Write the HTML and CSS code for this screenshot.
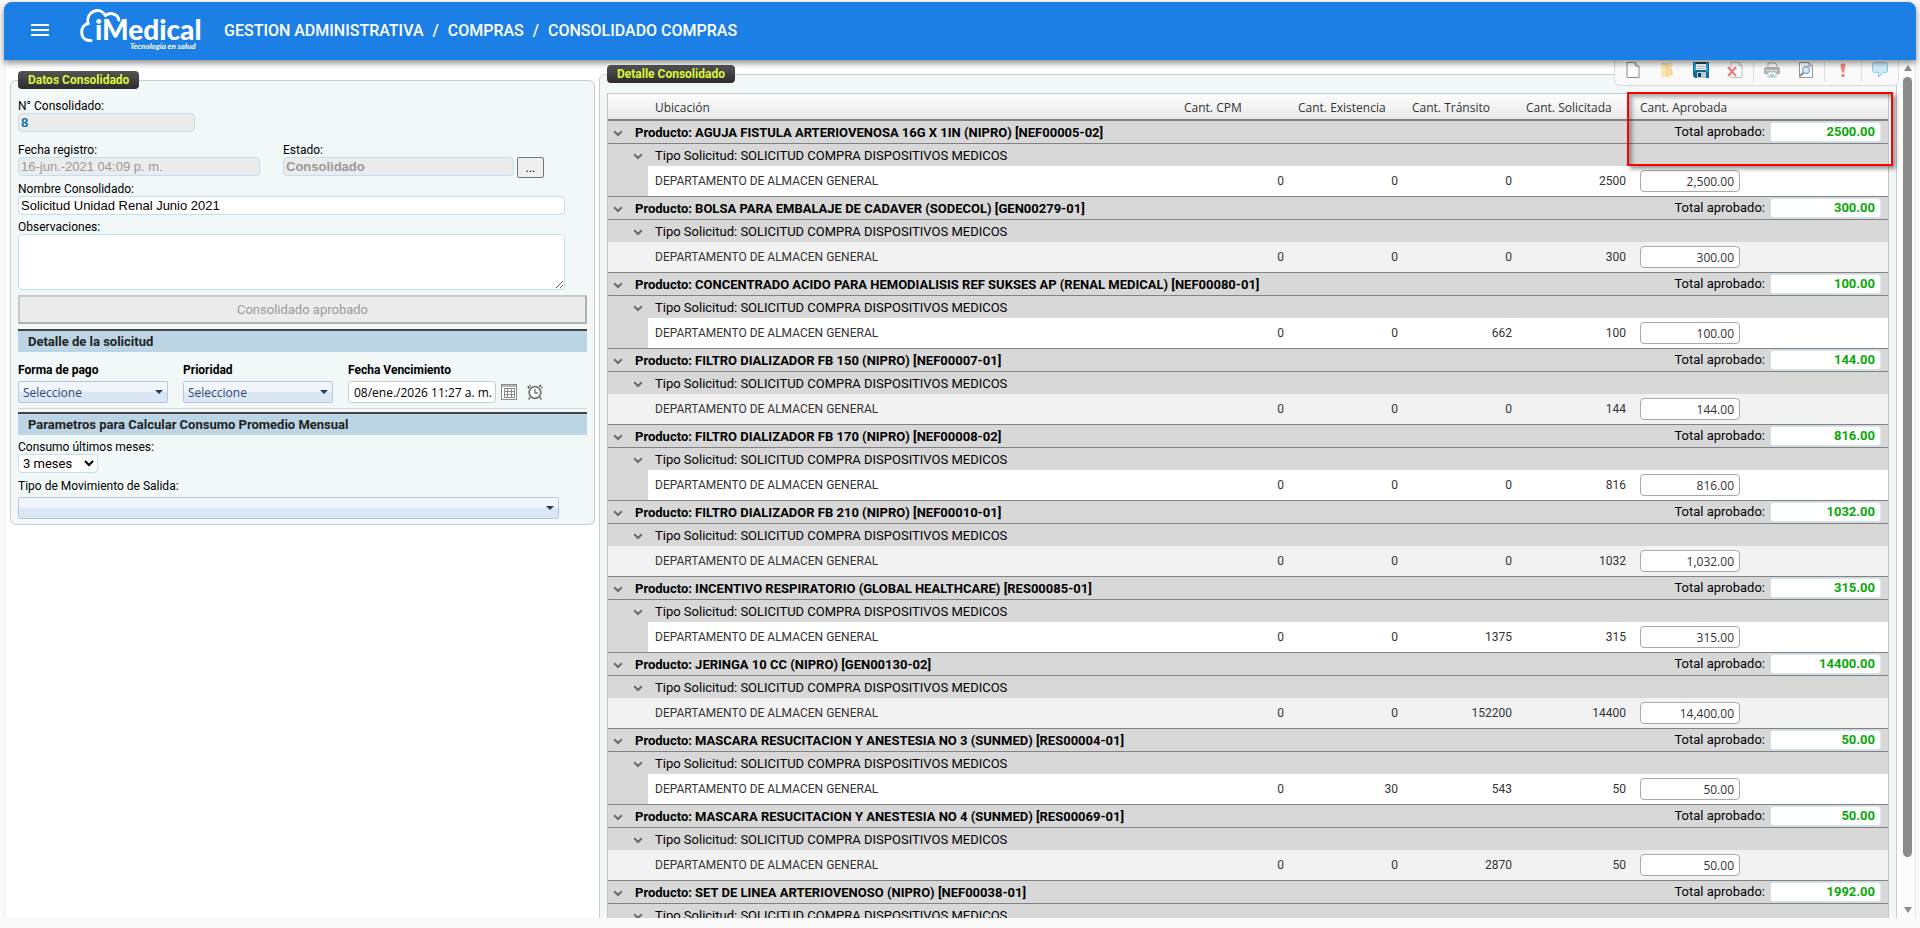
FILE: index.html
```html
<!DOCTYPE html>
<html lang="es">
<head>
  <meta charset="UTF-8">
  <meta name="viewport" content="width=device-width, initial-scale=1.0">
  <title>Consolidado Compras</title>
  <link rel="stylesheet" href="styles.css">
</head>
<body>
  <svg class="sprite" width="0" height="0" aria-hidden="true">
    <symbol id="chevron" viewBox="0 0 10 7">
      <path d="M1.2 1.2 L5 5 L8.8 1.2" fill="none" stroke="#6a6a6a" stroke-width="2"/>
    </symbol>
  </svg>

  <header class="topbar">
    <button class="menu" aria-label="Menú"><span></span><span></span><span></span></button>
    <svg class="logo" width="124" height="46" viewBox="0 0 124 46" role="img" aria-label="iMedical">
      <path d="M11 33.5 H8.5 C-0.5 32 -0.500 18.500 8 16.500 C5.500 5 19.500 -1.500 25.500 8.500 C31.500 4 38.500 8.500 38.800 13" fill="none" stroke="#fff" stroke-width="3" stroke-linecap="round"/>
      <text class="logo-name" x="15" y="33">iMedical</text>
      <text class="logo-tag" x="50" y="42">Tecnología en salud</text>
    </svg>
    <nav class="crumbs">
      <span>GESTION ADMINISTRATIVA</span><span>/</span><span>COMPRAS</span><span>/</span><span>CONSOLIDADO COMPRAS</span>
    </nav>
  </header>

  <main class="page">
    <div class="content">
      <fieldset class="panel panel-data">
        <legend>Datos Consolidado</legend>

        <div class="field">
          <label for="numero">N° Consolidado:</label>
          <input class="box box-number" type="text" id="numero" value="8" readonly>
        </div>

        <div class="row">
          <div class="field">
            <label for="fecha">Fecha registro:</label>
            <input class="box box-date" type="text" id="fecha" value="16-jun.-2021 04:09 p. m." disabled>
          </div>
          <div class="field">
            <label for="estado">Estado:</label>
            <div class="inline">
              <input class="box box-state" type="text" id="estado" value="Consolidado" disabled>
              <button class="more">...</button>
            </div>
          </div>
        </div>

        <div class="field">
          <label for="nombre">Nombre Consolidado:</label>
          <input class="box box-wide" type="text" id="nombre" value="Solicitud Unidad Renal Junio 2021">
        </div>
        <div class="field">
          <label for="obs">Observaciones:</label>
          <textarea class="box box-wide" id="obs"></textarea>
        </div>

        <button class="approve" disabled>Consolidado aprobado</button>

        <h2 class="section">Detalle de la solicitud</h2>
        <div class="request">
          <div class="field">
            <label for="pago">Forma de pago</label>
            <div class="combo"><select id="pago"><option>Seleccione</option></select></div>
          </div>
          <div class="field">
            <label for="prioridad">Prioridad</label>
            <div class="combo"><select id="prioridad"><option>Seleccione</option></select></div>
          </div>
          <div class="field">
            <label for="vence">Fecha Vencimiento</label>
            <div class="picker">
              <input type="text" id="vence" value="08/ene./2026 11:27 a. m.">
              <button aria-label="Calendario">
                <svg width="16" height="16" viewBox="0 0 16 16">
                  <rect x="0.500" y="0.500" width="15" height="15" fill="#fff" stroke="#8a8a8a"/>
                  <path d="M1 2 H15" stroke="#b5b5b5" stroke-width="2"/>
                  <path d="M3 4.500 H14 M3 7.500 H14 M3 10.500 H14 M3 13.500 H14 M3.500 4 V14 M6.500 4 V14 M10.500 4 V14 M13.500 4 V14" stroke="#8a8a8a"/>
                </svg>
              </button>
              <button aria-label="Hora">
                <svg width="16" height="16" viewBox="0 0 16 16" fill="none" stroke="#777">
                  <circle cx="8" cy="8.500" r="5.800" stroke-width="1.800" fill="#fff"/>
                  <path d="M8 5 V9 H11" stroke-width="1.300"/>
                  <path d="M0.800 4 L3.500 1.200 M12.500 1.200 L15.200 4" stroke="#555" stroke-width="2" stroke-dasharray="2 1"/>
                  <path d="M3.500 13 L1.500 15.500 M12.500 13 L14.500 15.500" stroke-width="1.500"/>
                </svg>
              </button>
            </div>
          </div>
        </div>

        <h2 class="section">Parametros para Calcular Consumo Promedio Mensual</h2>
        <div class="field">
          <label for="meses">Consumo últimos meses:</label>
          <select class="months" id="meses"><option>3 meses</option></select>
        </div>
        <div class="field field-move">
          <label for="salida">Tipo de Movimiento de Salida:</label>
          <div class="combo combo-wide"><select id="salida"><option></option></select></div>
        </div>
      </fieldset>

      <fieldset class="panel panel-detail">
        <legend>Detalle Consolidado</legend>
        <table class="grid">
          <colgroup>
            <col class="c-indent"><col class="c-indent"><col>
            <col class="c-num"><col class="c-num"><col class="c-num"><col class="c-num"><col class="c-total">
          </colgroup>
          <thead>
            <tr><th></th><th></th><th>Ubicación</th><th>Cant. CPM</th><th>Cant. Existencia</th><th>Cant. Tránsito</th><th>Cant. Solicitada</th><th>Cant. Aprobada</th></tr>
          </thead>
          <tbody>
            <tr class="product">
              <td><button class="toggle" aria-label="Contraer"><svg><use href="#chevron"/></svg></button></td>
              <td colspan="6">Producto: AGUJA FISTULA ARTERIOVENOSA 16G X 1IN (NIPRO) [NEF00005-02]</td>
              <td><label class="total">Total aprobado: <input type="text" value="2500.00"></label></td>
            </tr>
            <tr class="kind">
              <td></td><td><button class="toggle" aria-label="Contraer"><svg><use href="#chevron"/></svg></button></td>
              <td colspan="6">Tipo Solicitud: SOLICITUD COMPRA DISPOSITIVOS MEDICOS</td>
            </tr>
            <tr class="item">
              <td></td><td></td><td>DEPARTAMENTO DE ALMACEN GENERAL</td><td>0</td><td>0</td><td>0</td><td>2500</td>
              <td><input type="text" aria-label="Cant. Aprobada" value="2,500.00"></td>
            </tr>
          </tbody>
          <tbody>
            <tr class="product">
              <td><button class="toggle" aria-label="Contraer"><svg><use href="#chevron"/></svg></button></td>
              <td colspan="6">Producto: BOLSA PARA EMBALAJE DE CADAVER (SODECOL) [GEN00279-01]</td>
              <td><label class="total">Total aprobado: <input type="text" value="300.00"></label></td>
            </tr>
            <tr class="kind">
              <td></td><td><button class="toggle" aria-label="Contraer"><svg><use href="#chevron"/></svg></button></td>
              <td colspan="6">Tipo Solicitud: SOLICITUD COMPRA DISPOSITIVOS MEDICOS</td>
            </tr>
            <tr class="item">
              <td></td><td></td><td>DEPARTAMENTO DE ALMACEN GENERAL</td><td>0</td><td>0</td><td>0</td><td>300</td>
              <td><input type="text" aria-label="Cant. Aprobada" value="300.00"></td>
            </tr>
          </tbody>
          <tbody>
            <tr class="product">
              <td><button class="toggle" aria-label="Contraer"><svg><use href="#chevron"/></svg></button></td>
              <td colspan="6">Producto: CONCENTRADO ACIDO PARA HEMODIALISIS REF SUKSES AP (RENAL MEDICAL) [NEF00080-01]</td>
              <td><label class="total">Total aprobado: <input type="text" value="100.00"></label></td>
            </tr>
            <tr class="kind">
              <td></td><td><button class="toggle" aria-label="Contraer"><svg><use href="#chevron"/></svg></button></td>
              <td colspan="6">Tipo Solicitud: SOLICITUD COMPRA DISPOSITIVOS MEDICOS</td>
            </tr>
            <tr class="item">
              <td></td><td></td><td>DEPARTAMENTO DE ALMACEN GENERAL</td><td>0</td><td>0</td><td>662</td><td>100</td>
              <td><input type="text" aria-label="Cant. Aprobada" value="100.00"></td>
            </tr>
          </tbody>
          <tbody>
            <tr class="product">
              <td><button class="toggle" aria-label="Contraer"><svg><use href="#chevron"/></svg></button></td>
              <td colspan="6">Producto: FILTRO DIALIZADOR FB 150 (NIPRO) [NEF00007-01]</td>
              <td><label class="total">Total aprobado: <input type="text" value="144.00"></label></td>
            </tr>
            <tr class="kind">
              <td></td><td><button class="toggle" aria-label="Contraer"><svg><use href="#chevron"/></svg></button></td>
              <td colspan="6">Tipo Solicitud: SOLICITUD COMPRA DISPOSITIVOS MEDICOS</td>
            </tr>
            <tr class="item">
              <td></td><td></td><td>DEPARTAMENTO DE ALMACEN GENERAL</td><td>0</td><td>0</td><td>0</td><td>144</td>
              <td><input type="text" aria-label="Cant. Aprobada" value="144.00"></td>
            </tr>
          </tbody>
          <tbody>
            <tr class="product">
              <td><button class="toggle" aria-label="Contraer"><svg><use href="#chevron"/></svg></button></td>
              <td colspan="6">Producto: FILTRO DIALIZADOR FB 170 (NIPRO) [NEF00008-02]</td>
              <td><label class="total">Total aprobado: <input type="text" value="816.00"></label></td>
            </tr>
            <tr class="kind">
              <td></td><td><button class="toggle" aria-label="Contraer"><svg><use href="#chevron"/></svg></button></td>
              <td colspan="6">Tipo Solicitud: SOLICITUD COMPRA DISPOSITIVOS MEDICOS</td>
            </tr>
            <tr class="item">
              <td></td><td></td><td>DEPARTAMENTO DE ALMACEN GENERAL</td><td>0</td><td>0</td><td>0</td><td>816</td>
              <td><input type="text" aria-label="Cant. Aprobada" value="816.00"></td>
            </tr>
          </tbody>
          <tbody>
            <tr class="product">
              <td><button class="toggle" aria-label="Contraer"><svg><use href="#chevron"/></svg></button></td>
              <td colspan="6">Producto: FILTRO DIALIZADOR FB 210 (NIPRO) [NEF00010-01]</td>
              <td><label class="total">Total aprobado: <input type="text" value="1032.00"></label></td>
            </tr>
            <tr class="kind">
              <td></td><td><button class="toggle" aria-label="Contraer"><svg><use href="#chevron"/></svg></button></td>
              <td colspan="6">Tipo Solicitud: SOLICITUD COMPRA DISPOSITIVOS MEDICOS</td>
            </tr>
            <tr class="item">
              <td></td><td></td><td>DEPARTAMENTO DE ALMACEN GENERAL</td><td>0</td><td>0</td><td>0</td><td>1032</td>
              <td><input type="text" aria-label="Cant. Aprobada" value="1,032.00"></td>
            </tr>
          </tbody>
          <tbody>
            <tr class="product">
              <td><button class="toggle" aria-label="Contraer"><svg><use href="#chevron"/></svg></button></td>
              <td colspan="6">Producto: INCENTIVO RESPIRATORIO (GLOBAL HEALTHCARE) [RES00085-01]</td>
              <td><label class="total">Total aprobado: <input type="text" value="315.00"></label></td>
            </tr>
            <tr class="kind">
              <td></td><td><button class="toggle" aria-label="Contraer"><svg><use href="#chevron"/></svg></button></td>
              <td colspan="6">Tipo Solicitud: SOLICITUD COMPRA DISPOSITIVOS MEDICOS</td>
            </tr>
            <tr class="item">
              <td></td><td></td><td>DEPARTAMENTO DE ALMACEN GENERAL</td><td>0</td><td>0</td><td>1375</td><td>315</td>
              <td><input type="text" aria-label="Cant. Aprobada" value="315.00"></td>
            </tr>
          </tbody>
          <tbody>
            <tr class="product">
              <td><button class="toggle" aria-label="Contraer"><svg><use href="#chevron"/></svg></button></td>
              <td colspan="6">Producto: JERINGA 10 CC (NIPRO) [GEN00130-02]</td>
              <td><label class="total">Total aprobado: <input type="text" value="14400.00"></label></td>
            </tr>
            <tr class="kind">
              <td></td><td><button class="toggle" aria-label="Contraer"><svg><use href="#chevron"/></svg></button></td>
              <td colspan="6">Tipo Solicitud: SOLICITUD COMPRA DISPOSITIVOS MEDICOS</td>
            </tr>
            <tr class="item">
              <td></td><td></td><td>DEPARTAMENTO DE ALMACEN GENERAL</td><td>0</td><td>0</td><td>152200</td><td>14400</td>
              <td><input type="text" aria-label="Cant. Aprobada" value="14,400.00"></td>
            </tr>
          </tbody>
          <tbody>
            <tr class="product">
              <td><button class="toggle" aria-label="Contraer"><svg><use href="#chevron"/></svg></button></td>
              <td colspan="6">Producto: MASCARA RESUCITACION Y ANESTESIA NO 3 (SUNMED) [RES00004-01]</td>
              <td><label class="total">Total aprobado: <input type="text" value="50.00"></label></td>
            </tr>
            <tr class="kind">
              <td></td><td><button class="toggle" aria-label="Contraer"><svg><use href="#chevron"/></svg></button></td>
              <td colspan="6">Tipo Solicitud: SOLICITUD COMPRA DISPOSITIVOS MEDICOS</td>
            </tr>
            <tr class="item">
              <td></td><td></td><td>DEPARTAMENTO DE ALMACEN GENERAL</td><td>0</td><td>30</td><td>543</td><td>50</td>
              <td><input type="text" aria-label="Cant. Aprobada" value="50.00"></td>
            </tr>
          </tbody>
          <tbody>
            <tr class="product">
              <td><button class="toggle" aria-label="Contraer"><svg><use href="#chevron"/></svg></button></td>
              <td colspan="6">Producto: MASCARA RESUCITACION Y ANESTESIA NO 4 (SUNMED) [RES00069-01]</td>
              <td><label class="total">Total aprobado: <input type="text" value="50.00"></label></td>
            </tr>
            <tr class="kind">
              <td></td><td><button class="toggle" aria-label="Contraer"><svg><use href="#chevron"/></svg></button></td>
              <td colspan="6">Tipo Solicitud: SOLICITUD COMPRA DISPOSITIVOS MEDICOS</td>
            </tr>
            <tr class="item">
              <td></td><td></td><td>DEPARTAMENTO DE ALMACEN GENERAL</td><td>0</td><td>0</td><td>2870</td><td>50</td>
              <td><input type="text" aria-label="Cant. Aprobada" value="50.00"></td>
            </tr>
          </tbody>
          <tbody>
            <tr class="product">
              <td><button class="toggle" aria-label="Contraer"><svg><use href="#chevron"/></svg></button></td>
              <td colspan="6">Producto: SET DE LINEA ARTERIOVENOSO (NIPRO) [NEF00038-01]</td>
              <td><label class="total">Total aprobado: <input type="text" value="1992.00"></label></td>
            </tr>
            <tr class="kind">
              <td></td><td><button class="toggle" aria-label="Contraer"><svg><use href="#chevron"/></svg></button></td>
              <td colspan="6">Tipo Solicitud: SOLICITUD COMPRA DISPOSITIVOS MEDICOS</td>
            </tr>
          </tbody>
        </table>
      </fieldset>

      <div class="toolbar">
        <button class="off" aria-label="Nuevo">
          <svg width="16" height="16" viewBox="0 0 16 16"><path d="M2 0.500 H10.500 L14 4 V15.500 H2 Z" fill="#fff" stroke="#444"/><path d="M10.500 0.500 V4 H14" fill="#ddd" stroke="#444"/></svg>
        </button>
        <button class="off" aria-label="Abrir">
          <svg width="16" height="16" viewBox="0 0 16 16"><path d="M2 1 H10 V15 H2 Z" fill="#f3bd4a"/><path d="M9 1 H13 V7 L14 8 V14 H9 Z" fill="#f9d77e"/><path d="M2 2 L7 3 V16 L2 14 Z" fill="#fbdc8d"/><path d="M10 8 H12 V13" stroke="#e8a62e" fill="none"/></svg>
        </button>
        <button aria-label="Guardar">
          <svg width="16" height="16" viewBox="0 0 16 16"><path d="M0 0 H16 V16 H2 L0 14 Z" fill="#0f6c9a"/><path d="M1 1 H3 V9 H1 Z M13 1 H15 V10 H13 Z" fill="#2aa3d0"/><rect x="3" y="0" width="10" height="8" fill="#fff"/><path d="M3 1 H13" stroke="#1c3f52" stroke-width="2"/><path d="M4 4.500 H12 M4 6.500 H12" stroke="#9fc4d4"/><rect x="4" y="10" width="9" height="6" fill="#b9ccd3"/><rect x="5" y="11" width="3" height="4" fill="#163c50"/></svg>
        </button>
        <button class="off" aria-label="Eliminar">
          <svg width="16" height="16" viewBox="0 0 16 16"><path d="M4 0.500 H12 L15 3.500 V15.500 H4 Z" fill="#fff" stroke="#999"/><path d="M12 0.500 V3.500 H15" fill="none" stroke="#999"/><path d="M1 5 L9 14 M9 5 L1 14" stroke="#e32b20" stroke-width="2"/></svg>
        </button>
        <span class="divider"></span>
        <button class="off" aria-label="Imprimir">
          <svg width="16" height="16" viewBox="0 0 16 16"><path d="M4 1 H11 L13 3 V7 H4 Z" fill="#fff" stroke="#777"/><path d="M1 5 H15 L16 7 V12 H0 V7 Z" fill="#7d8286"/><path d="M2 8.500 H14" stroke="#cfd2d4"/><path d="M4 10 H12 V15 H4 Z" fill="#fff" stroke="#8a9aa5"/><path d="M6 12 H10 V15 H6 Z" fill="#62b3dc"/></svg>
        </button>
        <button class="off" aria-label="Vista previa">
          <svg width="16" height="16" viewBox="0 0 16 16"><path d="M1.500 0.500 H11 L14.500 4 V15.500 H1.500 Z" fill="#fff" stroke="#555"/><path d="M11 0.500 V4 H14.500" fill="none" stroke="#555"/><path d="M6 10 L2 14" stroke="#444" stroke-width="2"/><circle cx="8" cy="8" r="3.500" fill="#bfe4f7" stroke="#3585b8" stroke-width="1.500"/></svg>
        </button>
        <span class="divider"></span>
        <button class="off" aria-label="Alerta">
          <svg width="16" height="16" viewBox="0 0 16 16"><path d="M5.500 2.500 C6 1 10 1 10.500 2.500 C10.500 6 9.500 8 9 10.500 H7 C6.500 8 5.500 6 5.500 2.500 Z" fill="#e8402a"/><circle cx="8" cy="13.500" r="1.800" fill="#e8402a"/></svg>
        </button>
        <span class="divider"></span>
        <button class="off" aria-label="Comentarios">
          <svg width="16" height="16" viewBox="0 0 16 16"><path d="M2 0.700 H14 Q15.500 0.700 15.500 2.500 V8.500 Q15.500 10.300 14 10.300 H11.500 L6.500 15 V10.300 H2 Q0.500 10.300 0.500 8.500 V2.500 Q0.500 0.700 2 0.700 Z" fill="#b5e7fb" stroke="#3fa9d6"/></svg>
        </button>
      </div>
      <div class="highlight"></div>
    </div>

    <div class="scroll" aria-hidden="true">
      <span class="arrow-up"></span>
      <span class="thumb"></span>
      <span class="arrow-down"></span>
    </div>
  </main>
</body>
</html>
```

FILE: styles.css
```css
* {
  box-sizing: border-box;
}

body {
  margin: 0;
  height: 100vh;
  padding: 2px 4px 10px;
  display: flex;
  flex-direction: column;
  overflow: hidden;
  background: #fafafa;
  font-family: Roboto, "Liberation Sans", sans-serif;
  font-size: 12px;
  color: #000;
}

button,
input,
select,
textarea {
  font-family: inherit;
  margin: 0;
}

.sprite {
  position: absolute;
}

/* header */
.topbar {
  position: relative;
  z-index: 2;
  flex: none;
  display: flex;
  align-items: center;
  height: 58px;
  padding: 0 0 2px 24px;
  background: #1c7fe6;
  border-radius: 8px 8px 0 0;
  box-shadow: 0 3px 6px rgba(0, 0, 0, 0.45);
}

.menu {
  display: flex;
  flex-direction: column;
  gap: 3px;
  width: 24px;
  padding: 0 3px;
  border: 0;
  background: none;
}

.menu span {
  height: 2px;
  background: #fff;
}

.logo {
  margin-left: 28px;
}

.logo-name {
  font: 900 28px Lato, sans-serif;
  fill: #fff;
}

.logo-tag {
  font: italic 700 8px Lato, sans-serif;
  fill: #fff;
}

.crumbs {
  display: flex;
  gap: 9px;
  margin-left: 20px;
  font-size: 16px;
  font-weight: 500;
  color: #fff;
}

/* page */
.page {
  flex: 1;
  min-height: 0;
  display: flex;
  overflow: hidden;
  background: #fff;
  border-left: 1px solid #eee;
  border-right: 1px solid #e6e6e6;
}

.content {
  position: relative;
  flex: 1;
  min-width: 0;
  display: grid;
  grid-template-columns: 585px minmax(0, 1fr);
  align-items: start;
  gap: 4px;
  padding: 5px 3px 0 5px;
}

.panel {
  min-width: 0;
  margin: 0;
  padding: 0 7px 5px;
  background: #f2f7f8;
  border: 1px solid #ccc;
  border-radius: 6px;
}

.panel legend {
  height: 18px;
  padding: 0 10px;
  line-height: 18px;
  border-radius: 4px;
  background: linear-gradient(#555, #2c2c2c);
  color: #dff53c;
  font-weight: 700;
}

.panel-data {
  margin-top: 6px;
}

.panel-data legend {
  margin-bottom: 9px;
}

.field label {
  display: block;
  height: 15px;
  line-height: 17px;
}

.box {
  display: block;
  height: 19px;
  padding: 0 2px;
  border: 1px solid #bfe0ee;
  border-radius: 4px;
  background: #fff;
  font-family: "Liberation Sans", Arial, sans-serif;
  font-size: 13px;
}

.box[readonly],
.box:disabled {
  background: #ececec;
}

.box:disabled {
  color: #999;
}

.box-number {
  width: 177px;
  margin-bottom: 10px;
  color: #0e6f9e;
  font-weight: 700;
}

.box-date {
  width: 242px;
}

.box-state {
  width: 231px;
  font-weight: 700;
}

.box-wide {
  width: 547px;
  margin-bottom: 4px;
}

textarea.box-wide {
  height: 56px;
  margin-bottom: 5px;
}

.row {
  display: flex;
  gap: 23px;
  margin-bottom: 5px;
}

.inline {
  display: flex;
  gap: 3px;
  height: 19px;
}

.more {
  width: 27px;
  height: 21px;
  padding: 0;
  border: 1px solid #767676;
  border-radius: 2px;
  background: #efefef;
  font-size: 12px;
}

.approve {
  display: block;
  width: 100%;
  height: 29px;
  margin-bottom: 5px;
  padding: 0;
  border: 2px solid #b2b2b2;
  border-top-color: #c8c8c8;
  border-left-color: #c8c8c8;
  background: #ececec;
  color: #9a9a9a;
  font-size: 13px;
}

.section {
  height: 23px;
  margin: 0 0 4px;
  padding-left: 10px;
  line-height: 21px;
  border-top: 2px solid #444;
  background: #bcd5e4;
  color: #222;
  font-size: 13px;
}

.request {
  display: flex;
  gap: 15px;
  margin-bottom: 3px;
  padding: 6px 0 5px;
  border-bottom: 1px solid #d5d5d5;
}

.request label {
  margin-bottom: 4px;
  font-weight: 700;
}

.combo {
  position: relative;
  width: 150px;
  height: 22px;
}

.combo-wide {
  width: 541px;
}

.combo select {
  width: 100%;
  height: 100%;
  padding: 0 4px;
  appearance: none;
  border: 1px solid #b8c7dc;
  border-radius: 2px;
  background: linear-gradient(#f2f6fb 50%, #dce7f5 50%);
  color: #2a4a75;
  font-family: "Open Sans", "Noto Sans", sans-serif;
  font-size: 12px;
}

.combo::after {
  content: "";
  position: absolute;
  top: 9px;
  right: 5px;
  border: 4px solid transparent;
  border-top-color: #1f3a68;
  border-bottom: 0;
}

.picker {
  display: flex;
  align-items: center;
}

.picker input {
  width: 148px;
  height: 22px;
  margin-right: 5px;
  padding: 0 0 0 5px;
  border: 1px solid #ccc;
  border-radius: 3px;
  font-family: "Open Sans", "Noto Sans", sans-serif;
  font-size: 12px;
}

.picker button {
  display: block;
  margin-right: 10px;
  padding: 0;
  border: 0;
  background: none;
}

.picker svg {
  display: block;
}

.months {
  display: block;
  width: 80px;
  height: 19px;
  border: 1px solid #bfe0ee;
  border-radius: 4px;
  background: #fff;
  font-size: 13px;
}

.field-move {
  margin-top: 5px;
}

.field-move label {
  margin-bottom: 4px;
}

/* grid */
.panel-detail legend {
  margin-bottom: 10px;
}

.grid {
  width: 100%;
  table-layout: fixed;
  border-collapse: separate;
  border-spacing: 0;
  border: 1px solid #c4c4c4;
}

.c-indent {
  width: 20px;
}

.c-num {
  width: 114px;
}

.c-total {
  width: 255px;
}

.grid th {
  height: 27px;
  padding: 2px 7px 0;
  border-bottom: 2px solid #828282;
  background: linear-gradient(#fefefe, #e8e8e8);
  color: #333;
  font-family: "Open Sans", "Noto Sans", sans-serif;
  font-weight: 400;
  line-height: 16px;
  text-align: left;
}

.grid td {
  padding: 0 7px;
  white-space: nowrap;
}

.product td {
  height: 23px;
  border-bottom: 1px solid #828282;
  background: #d8d8d8;
  font-size: 13px;
  font-weight: 700;
}

.product td:last-child {
  font-weight: 400;
}

.kind td {
  height: 22px;
  background: #d8d8d8;
  font-size: 13px;
}

.item td {
  height: 31px;
  border-bottom: 1px solid #828282;
  background: #fff;
  color: #333;
  text-align: right;
}

.grid tbody:nth-of-type(even) .item td {
  background: #f2f2f2;
}

.item td:nth-child(3),
.item td:last-child {
  text-align: left;
}

.grid .item td:nth-child(-n+2) {
  background: #d8d8d8;
}

.grid tr td:nth-child(-n+2):empty {
  border-bottom-color: #d8d8d8;
}

.grid .item td:nth-child(-n+2):empty {
  border-bottom-color: #828282;
}

.toggle {
  display: block;
  width: 10px;
  height: 7px;
  margin: 3px 0 0 -2px;
  padding: 0;
  border: 0;
  background: none;
}

.toggle svg {
  display: block;
  width: 10px;
  height: 7px;
}

.total {
  display: flex;
  align-items: center;
  justify-content: flex-end;
  gap: 5px;
  height: 20px;
  margin-bottom: 1px;
}

.total input {
  width: 111px;
  height: 20px;
  padding: 0 5px;
  border: 1px solid #cfe6f2;
  border-radius: 3px;
  color: #0aa80a;
  font-size: 13px;
  font-weight: 700;
  text-align: right;
}

.item input {
  display: block;
  width: 100px;
  height: 22px;
  padding: 0 5px;
  border: 1px solid #a8a8a8;
  border-radius: 4px;
  color: #333;
  font-family: "Open Sans", "Noto Sans", sans-serif;
  font-size: 12px;
  text-align: right;
}

/* toolbar hangs from the header, over the detail panel */
.toolbar {
  position: absolute;
  top: 0;
  right: 1px;
  display: flex;
  align-items: flex-start;
  height: 26px;
  padding: 2px 1px 0;
  border: 1px solid #dcdcdc;
  border-top: 0;
  border-radius: 0 0 6px 6px;
  background: #fafafa;
}

.toolbar button {
  width: 34px;
  height: 16px;
  padding: 0;
  border: 0;
  background: none;
}

.toolbar svg {
  display: block;
  margin: 0 auto;
}

.toolbar .off {
  opacity: 0.6;
}

.divider {
  width: 1px;
  height: 20px;
  margin: 0 1px;
  background: #ddd;
}

/* marks the approved total */
.highlight {
  position: absolute;
  top: 32px;
  right: 7px;
  width: 266px;
  height: 74px;
  border: 2px solid #f00;
  box-shadow: 3px 3px 4px rgba(0, 0, 0, 0.4), inset 3px 3px 4px rgba(0, 0, 0, 0.35);
}

/* scrollbar */
.scroll {
  flex: none;
  display: flex;
  flex-direction: column;
  align-items: center;
  width: 15px;
  padding: 5px 0;
  background: #fcfcfc;
}

.thumb {
  width: 9px;
  height: 780px;
  margin: 6px 0 auto;
  border-radius: 5px;
  background: #8b8b8b;
}

.arrow-up,
.arrow-down {
  border: 4px solid transparent;
}

.arrow-up {
  border-top: 0;
  border-bottom: 6px solid #8b8b8b;
}

.arrow-down {
  border-bottom: 0;
  border-top: 6px solid #8b8b8b;
}
```
